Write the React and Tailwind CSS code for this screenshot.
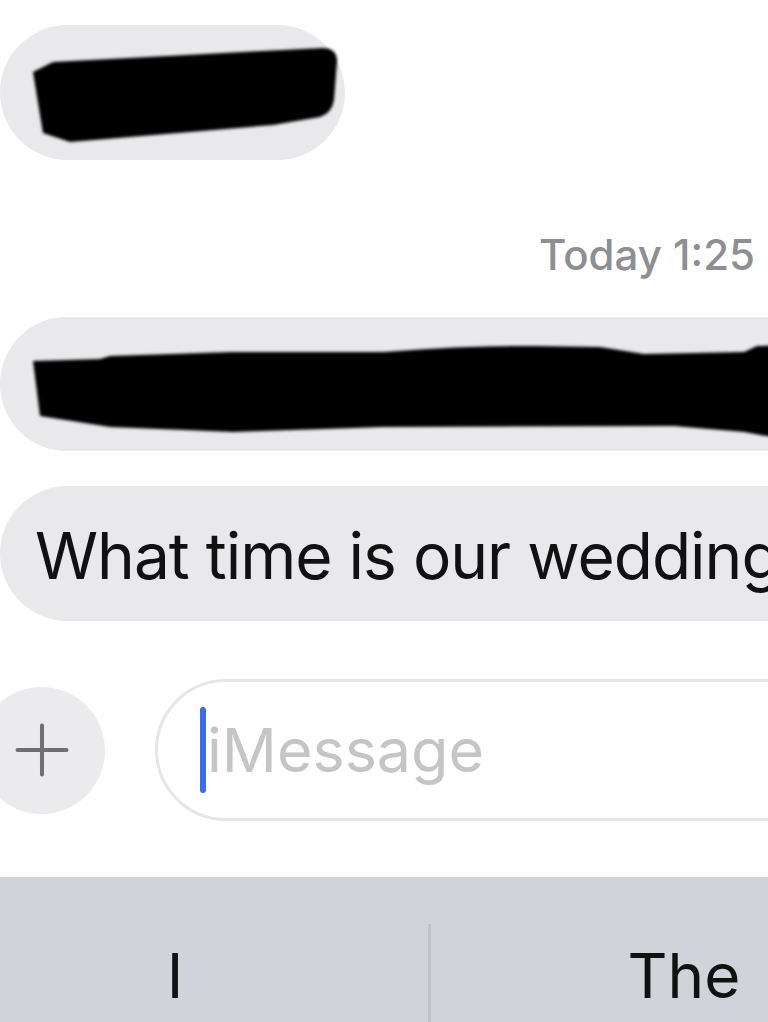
import { Plus } from 'lucide-react';

const FONT = { fontFamily: 'Inter, "Noto Sans", sans-serif' };

function Scribble({ width, height, points }) {
  return (
    <svg
      className="absolute inset-0"
      width={width}
      height={height}
      viewBox={`0 0 ${width} ${height}`}
    >
      <defs>
        <filter id={`soft-${width}`} x="-5%" y="-20%" width="110%" height="140%">
          <feGaussianBlur stdDeviation="1.8" />
        </filter>
      </defs>
      <path d={points} fill="#050505" filter={`url(#soft-${width})`} />
    </svg>
  );
}

export default function App() {
  return (
    <div className="w-[768px] h-[1022px] overflow-hidden bg-white flex flex-col" style={FONT}>
      {/* first received bubble, redacted */}
      <div className="pt-[25px]">
        <div className="relative w-[345px] h-[135px] rounded-[68px] bg-[#e9e9eb]">
          <Scribble
            width={345}
            height={135}
            points="M33 47 L53 37 L322 23 Q337 23 337 36 L334 75 Q332 88 320 92 L273 100 L70 117 L43 108 L40 90 Z"
          />
        </div>
      </div>

      {/* timestamp */}
      <div className="mt-[74px] pl-[539px] whitespace-nowrap text-[42px] leading-none font-medium text-[#8e8e93]">
        Today 1:25 PM
      </div>

      {/* second received bubble, redacted */}
      <div className="mt-[41px] relative w-[840px] h-[134px] rounded-[68px] bg-[#e9e9eb]">
        <Scribble
          width={840}
          height={134}
          points="M33 44 L100 42 L110 39 L233 35 L384 35 Q470 28 534 29 L600 30 L644 37 L744 35 L757 29 L800 28 L800 125 L744 115 L674 109 L384 110 L233 115 L110 110 L40 99 Z"
        />
      </div>

      {/* third received bubble */}
      <div className="mt-[35px] w-[900px] h-[135px] rounded-[68px] bg-[#e9e9eb] pl-[35px] pt-[38px]">
        <p className="whitespace-nowrap text-[64px] leading-none tracking-[-1px] text-[#111]">
          What time is our wedding?
        </p>
      </div>

      {/* input row */}
      <div className="mt-[58px] flex items-center">
        <div className="ml-[-22px] w-[127px] h-[127px] shrink-0 rounded-full bg-[#ebebed] flex items-center justify-center">
          <Plus className="w-[84px] h-[84px] text-[#6e6e73]" strokeWidth={1.15} />
        </div>
        <div className="ml-[50px] w-[700px] h-[142px] shrink-0 rounded-[71px] border-[3px] border-[#e6e6e8] flex items-center pl-[42px]">
          <span className="w-[6px] h-[86px] rounded-full bg-[#3d6de0]" />
          <span className="ml-[1px] whitespace-nowrap text-[61px] leading-none text-[#c5c5c8]">iMessage</span>
        </div>
      </div>

      {/* keyboard suggestion bar */}
      <div className="mt-[56px] flex-1 bg-[#d1d3d9] flex">
        <div className="ml-[-78px] w-[506px] shrink-0 flex justify-center pt-[68px]">
          <span className="text-[62px] leading-none text-[#111]">I</span>
        </div>
        <div className="mt-[47px] w-[3px] shrink-0 bg-[#bfc1c7]" />
        <div className="w-[506px] shrink-0 flex justify-center pt-[68px]">
          <span className="text-[62px] leading-none text-[#111]">The</span>
        </div>
      </div>
    </div>
  );
}
